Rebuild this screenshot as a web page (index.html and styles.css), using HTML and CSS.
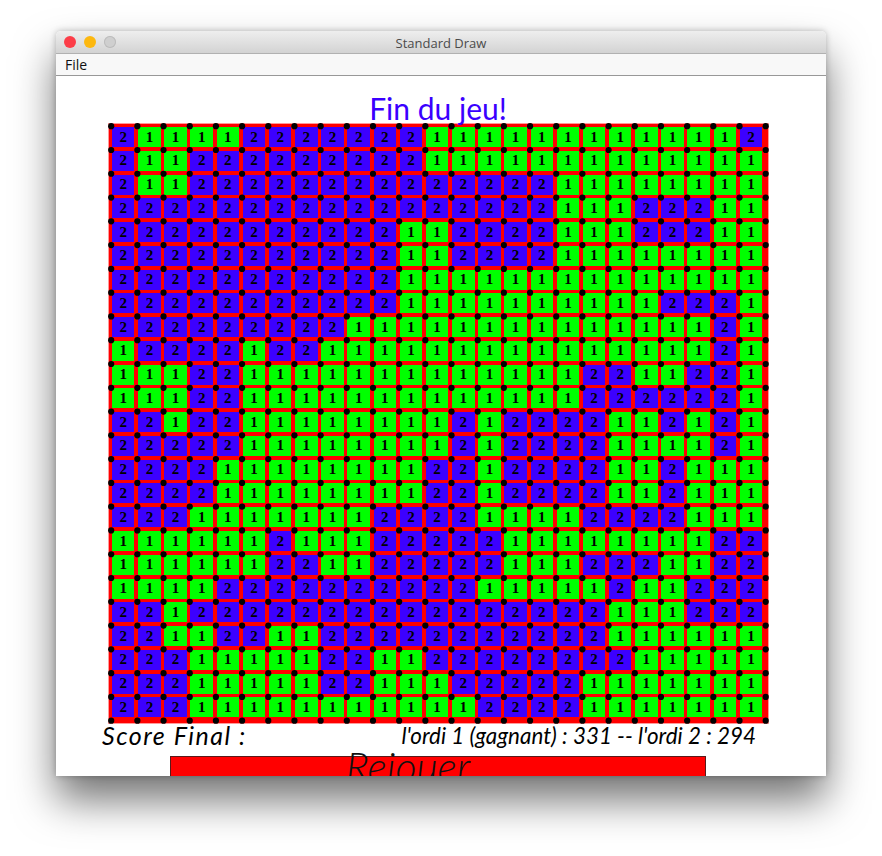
FILE: index.html
```html
<!DOCTYPE html>
<html lang="fr">
<head>
  <meta charset="UTF-8" />
  <meta name="viewport" content="width=device-width, initial-scale=1.0"/>
  <title>Standard Draw</title>
  <link rel="stylesheet" href="styles.css">
</head>
<body>
  <div class="window">
    <div class="titlebar">
      <div class="lights">
        <span class="light light-close"></span>
        <span class="light light-min"></span>
        <span class="light light-max"></span>
      </div>
      <div class="window-title">Standard Draw</div>
    </div>
    <div class="menubar"><span class="menu-item">File</span></div>
    <div class="canvas">
      <h1 class="game-title">Fin du jeu!</h1>
      <div class="board" id="board">
        <div class="cells" id="cells"></div>
        <svg class="dots" id="dots" width="659" height="599"></svg>
      </div>
      <div class="score">
        <span class="score-label">Score Final :</span>
        <span>l'ordi 1 (gagnant) : 331 -- l'ordi 2 : 294</span>
      </div>
      <div class="replay"><span class="replay-label">Rejouer</span></div>
    </div>
  </div>

  <script src="script.js"></script>
</body>
</html>
```

FILE: styles.css
```css
body {
  margin: 0;
  background-color: #fff;
  font-family: "Lato", sans-serif;
  height: 856px;
  overflow: hidden;
}

.window {
  width: 770px;
  height: 745px;
  margin: 31px 0 0 56px;
  border-radius: 5px 5px 0 0;
  background-color: #fff;
  box-shadow: 0 24px 42px rgba(0, 0, 0, 0.55), 0 0 6px rgba(0, 0, 0, 0.25);
  display: flex;
  flex-direction: column;
  overflow: hidden;
}

.titlebar {
  height: 22px;
  flex: none;
  display: flex;
  align-items: center;
  position: relative;
  background: linear-gradient(#eeeeee, #d3d3d3);
  border-bottom: 1px solid #b1b1b1;
}

.lights {
  display: flex;
  gap: 8px;
  padding-left: 8px;
}

.light {
  width: 12px;
  height: 12px;
  border-radius: 50%;
}

.light-close { background-color: #fc3d48; }
.light-min { background-color: #fdb80f; }
.light-max { background-color: #cfcfcf; box-shadow: inset 0 0 0 1px #bcbcbc; }

.window-title {
  position: absolute;
  left: 0;
  right: 0;
  padding-top: 1px;
  text-align: center;
  font-family: "Open Sans", sans-serif;
  font-size: 13px;
  color: #4b4b4b;
}

.menubar {
  height: 21px;
  flex: none;
  padding-left: 9px;
  display: flex;
  align-items: center;
  background-color: #f8f8f8;
  border-bottom: 1px solid #989898;
}

.menu-item {
  font-family: "Open Sans", sans-serif;
  font-size: 14px;
  color: #111;
}

.canvas {
  flex: 1;
  min-height: 0;
  overflow: hidden;
}

.game-title {
  height: 48px;
  margin: 0;
  padding-right: 6px;
  text-align: center;
  font-size: 30px;
  font-weight: 400;
  line-height: 64px;
  color: #3a00ff;
  position: relative;
  z-index: 1;
}

.board {
  position: relative;
  width: 659px;
  margin-left: 53px;
  padding: 3px 5px 5.3px 3px;
  box-sizing: border-box;
  background-color: #ff0000;
  box-shadow: 0 0 0 1px #ff9a9a;
}

.cells {
  display: grid;
  grid-template-columns: repeat(25, 22.48px);
  grid-auto-rows: 20px;
  gap: 3.78px 3.7px;
}

.cell {
  display: flex;
  align-items: center;
  justify-content: center;
  font-family: "Liberation Serif", serif;
  font-weight: bold;
  font-size: 15px;
  color: #000;
}

.cell-1 { background-color: #00ff00; }
.cell-2 { background-color: #3c00ff; }

.dots {
  position: absolute;
  left: 0;
  top: 0;
  overflow: visible;
}

.score {
  display: flex;
  justify-content: space-between;
  height: 33px;
  padding: 0 70px 0 46px;
  font-size: 22.4px;
  font-style: italic;
  line-height: 25px;
  color: #000;
}

.score-label {
  font-size: 25px;
  letter-spacing: 1.5px;
}

.replay {
  width: 536px;
  height: 30px;
  margin-left: 114px;
  padding-right: 60px;
  box-sizing: border-box;
  background-color: #ff0000;
  border: 1px solid #5a1a1a;
  text-align: center;
  font-size: 41px;
  font-style: italic;
  font-weight: 300;
  line-height: 20px;
  color: #111;
}
```

FILE: script.js
```js
const rows = [
  "2111122222221111111111112",
  "2112222222221111111111111",
  "2112222222222222211111111",
  "2222222222222222211122211",
  "2222222222211222211122211",
  "2222222222211222211111111",
  "2222222222211111111111111",
  "2222222222211111111112221",
  "2222222221111111111111121",
  "1222212211111111111111121",
  "1112211111111111112211221",
  "1112211111111111112222221",
  "2212211111111212222112121",
  "2222211111111212222111121",
  "2222111111112212222112111",
  "2222111111112212222112111",
  "2221111111222211112222111",
  "1111112111222221111111122",
  "1111112211222221112221122",
  "1111222222222211111211222",
  "2212222222222222222111222",
  "2211221122222222222111111",
  "2221111122112222222211111",
  "2221111122111222221111111",
  "2221111111111122221111111"
];

const pitchX = 26.18;
const pitchY = 23.78;

const cells = document.getElementById("cells");
rows.forEach(row => {
  for (const value of row) {
    const cell = document.createElement("div");
    cell.className = "cell cell-" + value;
    cell.innerText = value;
    cells.appendChild(cell);
  }
});

const dots = document.getElementById("dots");
for (let r = 0; r <= 25; r++) {
  for (let c = 0; c <= 25; c++) {
    const dot = document.createElementNS("http://www.w3.org/2000/svg", "circle");
    dot.setAttribute("cx", 2.2 + c * pitchX);
    dot.setAttribute("cy", 2.2 + r * pitchY);
    dot.setAttribute("r", 3.1);
    dots.appendChild(dot);
  }
}
```
